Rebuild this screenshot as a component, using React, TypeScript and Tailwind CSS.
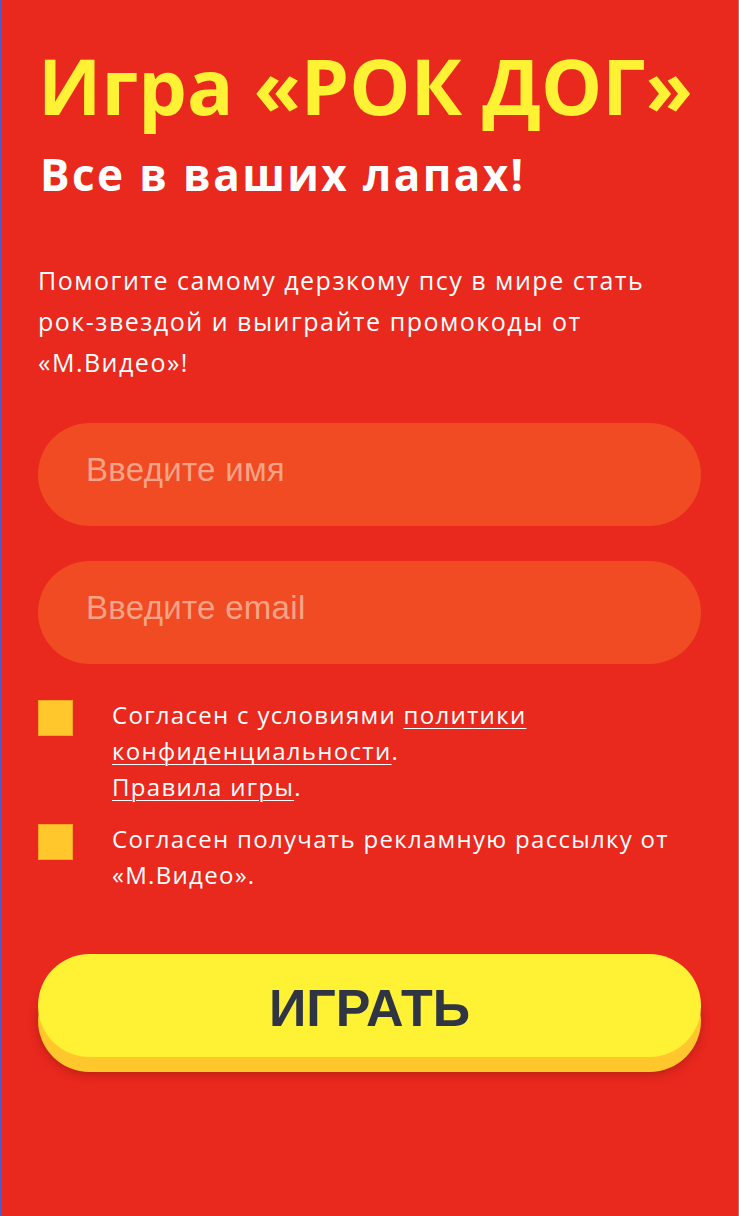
export default function App() {
  return (
    <div className="min-h-screen w-full bg-[#e9281e] border-l border-l-[#4c5cc4] border-r border-r-[#f25a4e] font-['Open_Sans',sans-serif]">
      <div className="px-[37px] pt-[47px] pb-16">
        <h1 className="text-[77px] leading-none font-bold text-[#fff133] whitespace-nowrap">
          Игра «РОК ДОГ»
        </h1>
        <h2 className="mt-[28px] pl-[2px] text-[44px] leading-none font-bold text-white tracking-[2.4px]">
          Все в ваших лапах!
        </h2>
        <p className="mt-[64px] text-[25px] leading-[41px] tracking-[1.5px] text-white">
          Помогите самому дерзкому псу в мире стать рок-звездой и выиграйте промокоды от «М.Видео»!
        </p>

        <form className="mt-[40px] flex flex-col gap-[35px]">
          <input
            type="text"
            placeholder="Введите имя"
            className="h-[103px] w-full rounded-full bg-[#f04b22] pl-[48px] pr-6 pb-[9px] text-[33px] tracking-[0.3px] text-white outline-none placeholder:text-[#f7a387] font-['Liberation_Sans',sans-serif]"
          />
          <input
            type="email"
            placeholder="Введите email"
            className="h-[103px] w-full rounded-full bg-[#f04b22] pl-[48px] pr-6 pb-[9px] text-[33px] tracking-[0.3px] text-white outline-none placeholder:text-[#f7a387] font-['Liberation_Sans',sans-serif]"
          />
        </form>

        <div className="mt-[33px] flex flex-col gap-[16px]">
          <label className="flex items-start gap-[39px]">
            <span className="mt-[3px] h-[36px] w-[35px] shrink-0 bg-[#ffc72c] border border-[#f5a623]" />
            <span className="text-[24px] leading-[36px] tracking-[1.3px] text-white">
              Согласен с условиями <a href="#" className="underline underline-offset-4 decoration-1">политики конфиденциальности</a>.
              <br />
              <a href="#" className="underline underline-offset-4 decoration-1">Правила игры</a>.
            </span>
          </label>
          <label className="flex items-start gap-[39px]">
            <span className="mt-[3px] h-[36px] w-[35px] shrink-0 bg-[#ffc72c] border border-[#f5a623]" />
            <span className="text-[24px] leading-[36px] tracking-[1.3px] text-white">
              Согласен получать рекламную рассылку от «М.Видео».
            </span>
          </label>
        </div>

        <button
          type="button"
          className="mt-[61px] h-[103px] w-full rounded-full bg-[#fff133] pt-[4px] text-[52px] font-bold text-[#2f3542] font-['Liberation_Sans',sans-serif] shadow-[0_15px_0_#ffc72c,0_17px_10px_rgba(90,20,0,0.35)]"
        >
          ИГРАТЬ
        </button>
      </div>
    </div>
  );
}
